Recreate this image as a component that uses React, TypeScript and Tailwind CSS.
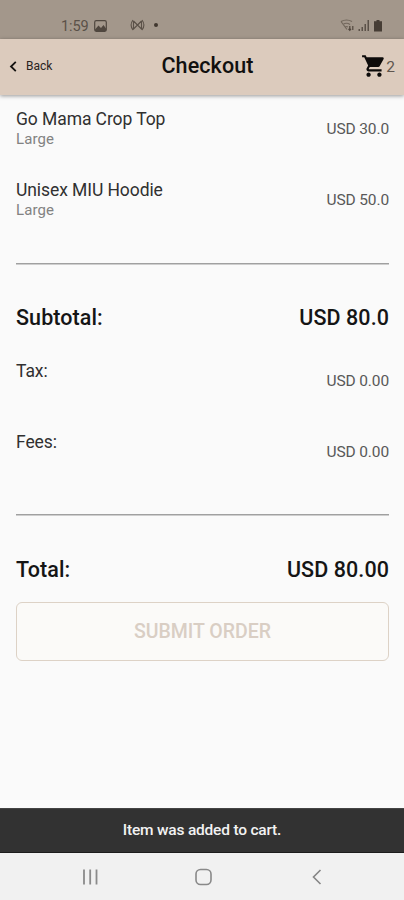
import React from "react";

function StatusBar() {
  return (
    <div className="flex h-[39px] shrink-0 items-end bg-[#a3978b] pr-[22px] pb-[4px] pl-[61px] text-[#5b5148]">
      <span className="w-[33px] text-[14.5px] leading-[17px] tracking-[-0.1px]">1:59</span>
      <svg className="mb-[3px] h-3 w-[13px]" viewBox="0 0 13 12">
        <rect x="0.7" y="0.7" width="11.6" height="10.6" rx="1.5" fill="none" stroke="#50473f" strokeWidth="1.2" />
        <path d="M1 9.5 4.5 5.5 7 8 9.5 5 12 8.5V11H1Z" fill="#50473f" />
      </svg>
      <svg className="mb-[4px] ml-[23px] h-3 w-[15px]" viewBox="0 0 15 12" fill="none" stroke="#5b5148" strokeWidth="1.1">
        <path d="M3 1Q-.8 6 3 11M12 1Q15.800 6 12 11M3.500 2v8l3-3M11.500 2v8l-3-3M3.500 2l8 8M11.500 2l-8 8" />
      </svg>
      <span className="mb-[8px] ml-[9px] size-1 rounded-full bg-[#40372f]" />
      <svg className="mb-[3px] ml-auto h-[13px] w-[15px]" viewBox="0 0 15 13" fill="none" stroke="#72675c" strokeWidth="1.200">
        <path d="M1 2.500Q6.500-.5 12 2.500M3 5.500Q6.500 3 10 5.500M5 8Q6.500 7 8 8M1 2.500 7 10.500" />
        <path d="M9.800 7v4M8.500 9.800l1.300 1.500L11 9.800M12.800 11V7" stroke="#51473e" />
      </svg>
      <svg className="mb-[3px] ml-[3px] h-[13px] w-3" viewBox="0 0 12 13" fill="#5b5148">
        <path d="M.5 10h1.500v2H.5zM3.500 8h1.500v4H3.500zM6.500 5H8v7H6.500zM9.500 1H11v11H9.500z" />
      </svg>
      <svg className="mb-[3px] ml-[4px] h-[13px] w-2" viewBox="0 0 8 13">
        <path d="M2.500 1h3v1.200H8V12.500H0V2.200h2.500Z" fill="#463d35" />
      </svg>
    </div>
  );
}

function Header() {
  return (
    <header className="z-10 grid h-[56px] shrink-0 grid-cols-[1fr_auto_1fr] items-center bg-[#dccbbd] shadow-[0_1px_4px_rgba(0,0,0,0.4)]">
      <div className="flex items-center pl-[9px]">
        <svg className="mt-[-2px] h-[11px] w-[8px]" viewBox="0 0 8 11" fill="none" stroke="#151311" strokeWidth="1.800">
          <path d="M6.800.8 2 5.500 6.800 10.200" />
        </svg>
        <span className="mt-[-2px] ml-[9px] text-[12px] leading-4 text-[#29241f]">Back</span>
      </div>
      <h1 className="mt-[-2px] ml-[11px] text-[21.5px] leading-6 font-medium tracking-[0.1px] text-[#11100f]">Checkout</h1>
      <div className="mt-[-2px] flex items-center justify-end pr-[9px]">
        <svg className="mr-[-1px] h-[26px] w-[26px]" viewBox="0 0 24 24" fill="#0d0b0a">
          <path d="M7 18c-1.100 0-1.990.9-1.990 2S5.900 22 7 22s2-.9 2-2-.9-2-2-2zM1 2v2h2l3.600 7.590-1.350 2.450c-.16.28-.25.61-.25.960 0 1.100.9 2 2 2h12v-2H7.420c-.14 0-.25-.11-.25-.25l.03-.12.900-1.630h7.450c.75 0 1.410-.41 1.750-1.030l3.580-6.490A1 1 0 0 0 20 4H5.210l-.94-2H1zm16 16c-1.100 0-1.990.9-1.990 2s.89 2 1.990 2 2-.9 2-2-.9-2-2-2z" />
        </svg>
        <span className="mt-[2px] text-[15.5px] leading-4 text-[#5e554e]">2</span>
      </div>
    </header>
  );
}

type LineProps = { title: string; detail?: string; price: string };

function LineItem({ title, detail, price }: LineProps) {
  return (
    <div className="flex h-[71px] items-start justify-between">
      <div className="flex flex-col pt-[4px]">
        <span className="text-[17.5px] leading-[20px] tracking-[-0.08px] text-[#303030]">{title}</span>
        {detail && <span className="text-[15px] leading-[21px] tracking-[0.1px] text-[#828282]">{detail}</span>}
      </div>
      <span className="pt-[14px] text-[15.5px] leading-[20px] tracking-[-0.12px] text-[#585858]">{price}</span>
    </div>
  );
}

function SumLine({ label, amount }: { label: string; amount: string }) {
  return (
    <div className="flex h-6 items-center justify-between text-[21.5px] leading-6 font-medium tracking-[0.08px] text-[#151515]">
      <span>{label}</span>
      <span>{amount}</span>
    </div>
  );
}

function Rule() {
  return <div className="h-[2px] border-t border-[#a0a0a0] bg-[#cecece]" />;
}

export default function App() {
  return (
    <div className="flex h-[900px] w-[404px] flex-col overflow-hidden bg-[#fafafa] font-[Roboto,sans-serif]">
      <StatusBar />
      <Header />
      <main className="flex flex-1 flex-col pt-[10px] pr-[15px] pl-[16px]">
        <LineItem title="Go Mama Crop Top" detail="Large" price="USD 30.0" />
        <LineItem title="Unisex MIU Hoodie" detail="Large" price="USD 50.0" />
        <div className="mt-[16px]"><Rule /></div>
        <div className="mt-[41px]"><SumLine label="Subtotal:" amount="USD 80.0" /></div>
        <div className="mt-[27px]">
          <LineItem title="Tax:" price="USD 0.00" />
          <LineItem title="Fees:" price="USD 0.00" />
        </div>
        <div className="mt-[15px]"><Rule /></div>
        <div className="mt-[42px]"><SumLine label="Total:" amount="USD 80.00" /></div>
        <button className="mt-[20px] h-[59px] rounded-[6px] border border-[#ddd2c6] bg-[#fbfaf8] text-[19.5px] leading-6 font-medium text-[#d9cec4]">
          SUBMIT ORDER
        </button>
      </main>
      <div className="flex h-[45px] shrink-0 items-center justify-center border-t border-b border-t-[#444444] border-b-[#1c1c1c] bg-[#323232] text-[15.5px] font-medium tracking-[-0.2px] text-[#f2f2f2]">
        Item was added to cart.
      </div>
      <nav className="flex h-[47px] shrink-0 items-center bg-[#f1f1f1] pl-[82px]">
        <svg className="h-[16px] w-[16px]" viewBox="0 0 16 16" stroke="#8b8b8b" strokeWidth="1.800">
          <path d="M2 .5v15M8.200.5v15M14.500.5v15" />
        </svg>
        <svg className="ml-[97px] h-[18px] w-[17px]" viewBox="0 0 17 18" fill="none" stroke="#898989" strokeWidth="1.600">
          <rect x="1" y="1.500" width="15" height="15" rx="4.500" />
        </svg>
        <svg className="ml-[100px] h-[16px] w-[10px]" viewBox="0 0 10 16" fill="none" stroke="#858585" strokeWidth="1.600">
          <path d="M8.500 1 1.500 8 8.500 15" />
        </svg>
      </nav>
    </div>
  );
}
